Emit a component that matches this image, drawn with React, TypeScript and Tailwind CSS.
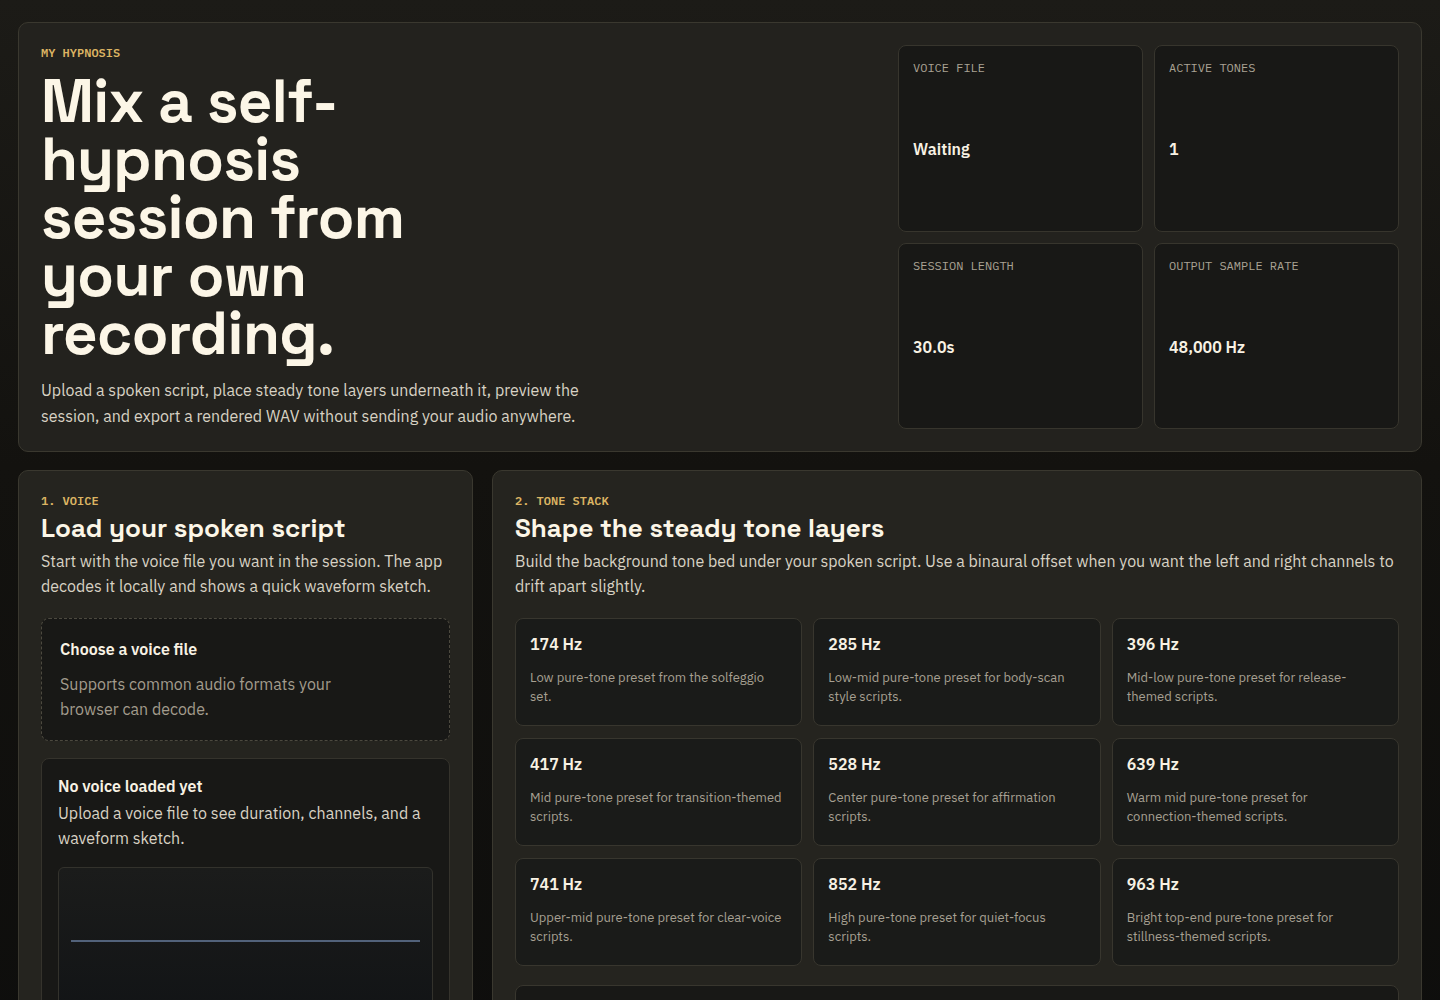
import React from "react";

const sans = "font-['IBM_Plex_Sans','Roboto','Liberation_Sans',sans-serif]";
const mono = "font-['IBM_Plex_Mono','Liberation_Mono','DejaVu_Sans_Mono',monospace]";
const display = "font-['Space_Grotesk','Inter','Liberation_Sans',sans-serif]";

const stats = [
  { label: "VOICE FILE", value: "Waiting" },
  { label: "ACTIVE TONES", value: "1" },
  { label: "SESSION LENGTH", value: "30.0s" },
  { label: "OUTPUT SAMPLE RATE", value: "48,000 Hz" },
];

// U+2011 keeps "connection‑themed" together, as the original wraps it
const tones = [
  { hz: 174, note: "Low pure-tone preset from the solfeggio set." },
  { hz: 285, note: "Low-mid pure-tone preset for body-scan style scripts." },
  { hz: 396, note: "Mid-low pure-tone preset for release-themed scripts." },
  { hz: 417, note: "Mid pure-tone preset for transition-themed scripts." },
  { hz: 528, note: "Center pure-tone preset for affirmation scripts." },
  { hz: 639, note: "Warm mid pure-tone preset for connection\u2011themed scripts." },
  { hz: 741, note: "Upper-mid pure-tone preset for clear-voice scripts." },
  { hz: 852, note: "High pure-tone preset for quiet-focus scripts." },
  { hz: 963, note: "Bright top-end pure-tone preset for stillness-themed scripts." },
];

function Eyebrow({ children }: { children: React.ReactNode }) {
  return (
    <p className={`${mono} text-[12px] leading-[16px] font-semibold text-[#dcb463]`}>
      {children}
    </p>
  );
}

function StatCell({ label, value }: { label: string; value: string }) {
  return (
    <div className="flex flex-col rounded-[8px] border border-[#37352d] bg-[#181816] p-[14px]">
      <p className={`${mono} text-[12px] leading-[15px] text-[#aaa394]`}>{label}</p>
      <div className="flex flex-1 items-center pt-[7px]">
        <p className={`${sans} text-[16px] font-semibold text-[#f8f2e4]`}>{value}</p>
      </div>
    </div>
  );
}

function ToneCard({ hz, note }: { hz: number; note: string }) {
  return (
    <button className="rounded-[8px] border border-[#38362e] bg-[#1a1b19] px-[14px] pt-[13px] pb-[19px] text-left">
      <p className={`${sans} text-[16px] leading-[24px] font-semibold text-[#f8f2e4]`}>{hz} Hz</p>
      <p className={`${sans} mt-[12px] text-[13px] leading-[19px] text-[#a7a092]`}>{note}</p>
    </button>
  );
}

export default function App() {
  return (
    <div className={`${sans} min-h-screen bg-[linear-gradient(180deg,#1c1b17_0%,#13120f_40%,#0d0d0c_100%)] px-[18px] pt-[22px] pb-[40px] text-[#d8d2c4]`}>
      {/* Hero */}
      <section className="grid grid-cols-[1fr_501px] gap-8 rounded-[10px] border border-[#3a382f] bg-[#23221e] p-[22px]">
        <div>
          <Eyebrow>MY HYPNOSIS</Eyebrow>
          <h1 className={`${display} mt-[12px] max-w-[430px] text-[60px] leading-[58px] font-semibold tracking-[-0.01em] text-[#fcf6e7]`}>
            Mix a self-hypnosis session from your own recording.
          </h1>
          <p className="mt-[14px] max-w-[570px] text-[16px] leading-[26px] text-[#d8d2c4]">
            Upload a spoken script, place steady tone layers underneath it, preview the session, and export a rendered WAV without sending your audio anywhere.
          </p>
        </div>
        <div className="grid grid-cols-2 grid-rows-2 gap-[11px]">
          {stats.map((s) => (
            <StatCell key={s.label} label={s.label} value={s.value} />
          ))}
        </div>
      </section>

      <div className="mt-[18px] grid grid-cols-[455px_1fr] items-start gap-[19px]">
        {/* Voice */}
        <section className="rounded-[10px] border border-[#3a382f] bg-[#25241f] p-[22px]">
          <Eyebrow>1. VOICE</Eyebrow>
          <h2 className={`${display} mt-[3px] text-[26px] leading-[32px] font-semibold text-[#fcf6e7]`}>
            Load your spoken script
          </h2>
          <p className="mt-[5px] text-[16px] leading-[25px] text-[#d8d2c4]">
            Start with the voice file you want in the session. The app decodes it locally and shows a quick waveform sketch.
          </p>

          <label className="mt-[19px] block cursor-pointer rounded-[8px] border border-dashed border-[#4c493f] bg-[#181816] p-[18px]">
            <p className="text-[16px] leading-[24px] font-semibold text-[#f8f2e4]">Choose a voice file</p>
            <p className="mt-[11px] max-w-[290px] text-[16px] leading-[25px] text-[#a39c8d]">
              Supports common audio formats your browser can decode.
            </p>
          </label>

          <div className="mt-[17px] rounded-[8px] border border-[#35332c] bg-[#181816] p-[16px]">
            <p className="text-[16px] leading-[22px] font-semibold text-[#f8f2e4]">No voice loaded yet</p>
            <p className="mt-[4px] text-[16px] leading-[25px] text-[#d8d2c4]">
              Upload a voice file to see duration, channels, and a waveform sketch.
            </p>
            <div className="mt-[16px] flex h-[148px] items-center rounded-[6px] border border-[#33322c] bg-[linear-gradient(180deg,#1b1c1b_0%,#121416_100%)] px-[12px]">
              <div className="h-[2px] w-full bg-[#52627a]" />
            </div>
          </div>
        </section>

        {/* Tone stack */}
        <section className="rounded-[10px] border border-[#3a382f] bg-[#25241f] p-[22px]">
          <Eyebrow>2. TONE STACK</Eyebrow>
          <h2 className={`${display} mt-[3px] text-[26px] leading-[32px] font-semibold text-[#fcf6e7]`}>
            Shape the steady tone layers
          </h2>
          <p className="mt-[5px] text-[16px] leading-[25px] text-[#d8d2c4]">
            Build the background tone bed under your spoken script. Use a binaural offset when you want the left and right channels to drift apart slightly.
          </p>

          <div className="mt-[19px] grid grid-cols-3 gap-x-[11px] gap-y-[12px]">
            {tones.map((t) => (
              <ToneCard key={t.hz} hz={t.hz} note={t.note} />
            ))}
          </div>

          <div className="mt-[19px] h-[120px] rounded-[8px] border border-[#38362e] bg-[#181816]" />
        </section>
      </div>
    </div>
  );
}
